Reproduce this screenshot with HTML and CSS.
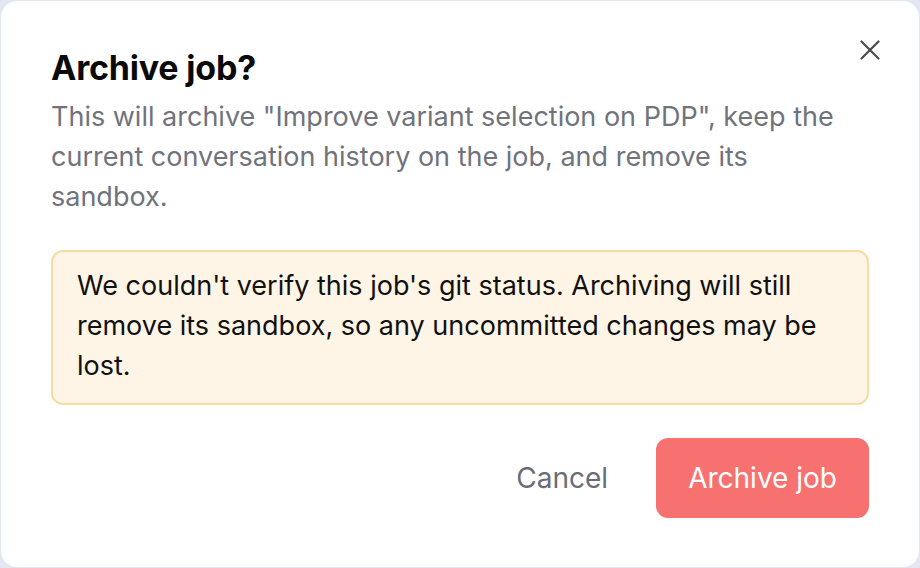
FILE: index.html
```html
<!DOCTYPE html>
<html>
<head>
<meta charset="utf-8">
<title>Archive job?</title>
<link rel="stylesheet" href="styles.css">
</head>
<body>
<div class="dialog">
  <button class="close" aria-label="Close">
    <svg width="20" height="20" viewBox="0 0 20 20" fill="none" stroke="#4a4a4f" stroke-width="2.2" stroke-linecap="round"><path d="M1.5 1.5L18.5 18.5M18.5 1.5L1.5 18.5"/></svg>
  </button>
  <h2 class="title">Archive job?</h2>
  <p class="desc">This will archive "Improve variant selection on PDP", keep the current conversation history on the job, and remove its sandbox.</p>
  <div class="warn">We couldn't verify this job's git status. Archiving will still remove its sandbox, so any uncommitted changes may be lost.</div>
  <div class="actions">
    <button class="btn cancel">Cancel</button>
    <button class="btn danger">Archive job</button>
  </div>
</div>
</body>
</html>
```
FILE: styles.css
```css
html, body { height: 100%; }
body {
  margin: 0;
  background: #e3e7f1;
  font-family: Inter, "Noto Sans", sans-serif;
  padding: 1px;
  box-sizing: border-box;
}
.dialog {
  position: relative;
  height: 100%;
  box-sizing: border-box;
  background: #fff;
  border-radius: 16px;
  padding: 45px 50px 50px 50px;
}
.close {
  position: absolute;
  top: 39px;
  right: 39px;
  background: none;
  border: 0;
  padding: 0;
  line-height: 0;
  cursor: pointer;
}
.title {
  margin: 0 0 7px;
  font-size: 34px;
  font-weight: 700;
  letter-spacing: -0.2px;
  color: #0a0a0a;
  line-height: 44px;
}
.desc {
  margin: 0;
  font-size: 27px;
  line-height: 40px;
  color: #71737c;
}
.warn {
  margin-top: 33px;
  background: #fef5e7;
  border: 2px solid #f6dca2;
  border-radius: 12px;
  padding: 14px 24px 17px;
  font-size: 27px;
  line-height: 40px;
  color: #111;
}
.actions {
  display: flex;
  justify-content: flex-end;
  align-items: center;
  gap: 48px;
  margin-top: 33px;
}
.btn {
  font-family: inherit;
  font-size: 28px;
  border: 0;
  cursor: pointer;
}
.cancel {
  background: none;
  color: #6a6c76;
  padding: 0;
}
.danger {
  background: #f87171;
  color: #fff;
  border-radius: 12px;
  height: 80px;
  padding: 0 32px;
}
```
